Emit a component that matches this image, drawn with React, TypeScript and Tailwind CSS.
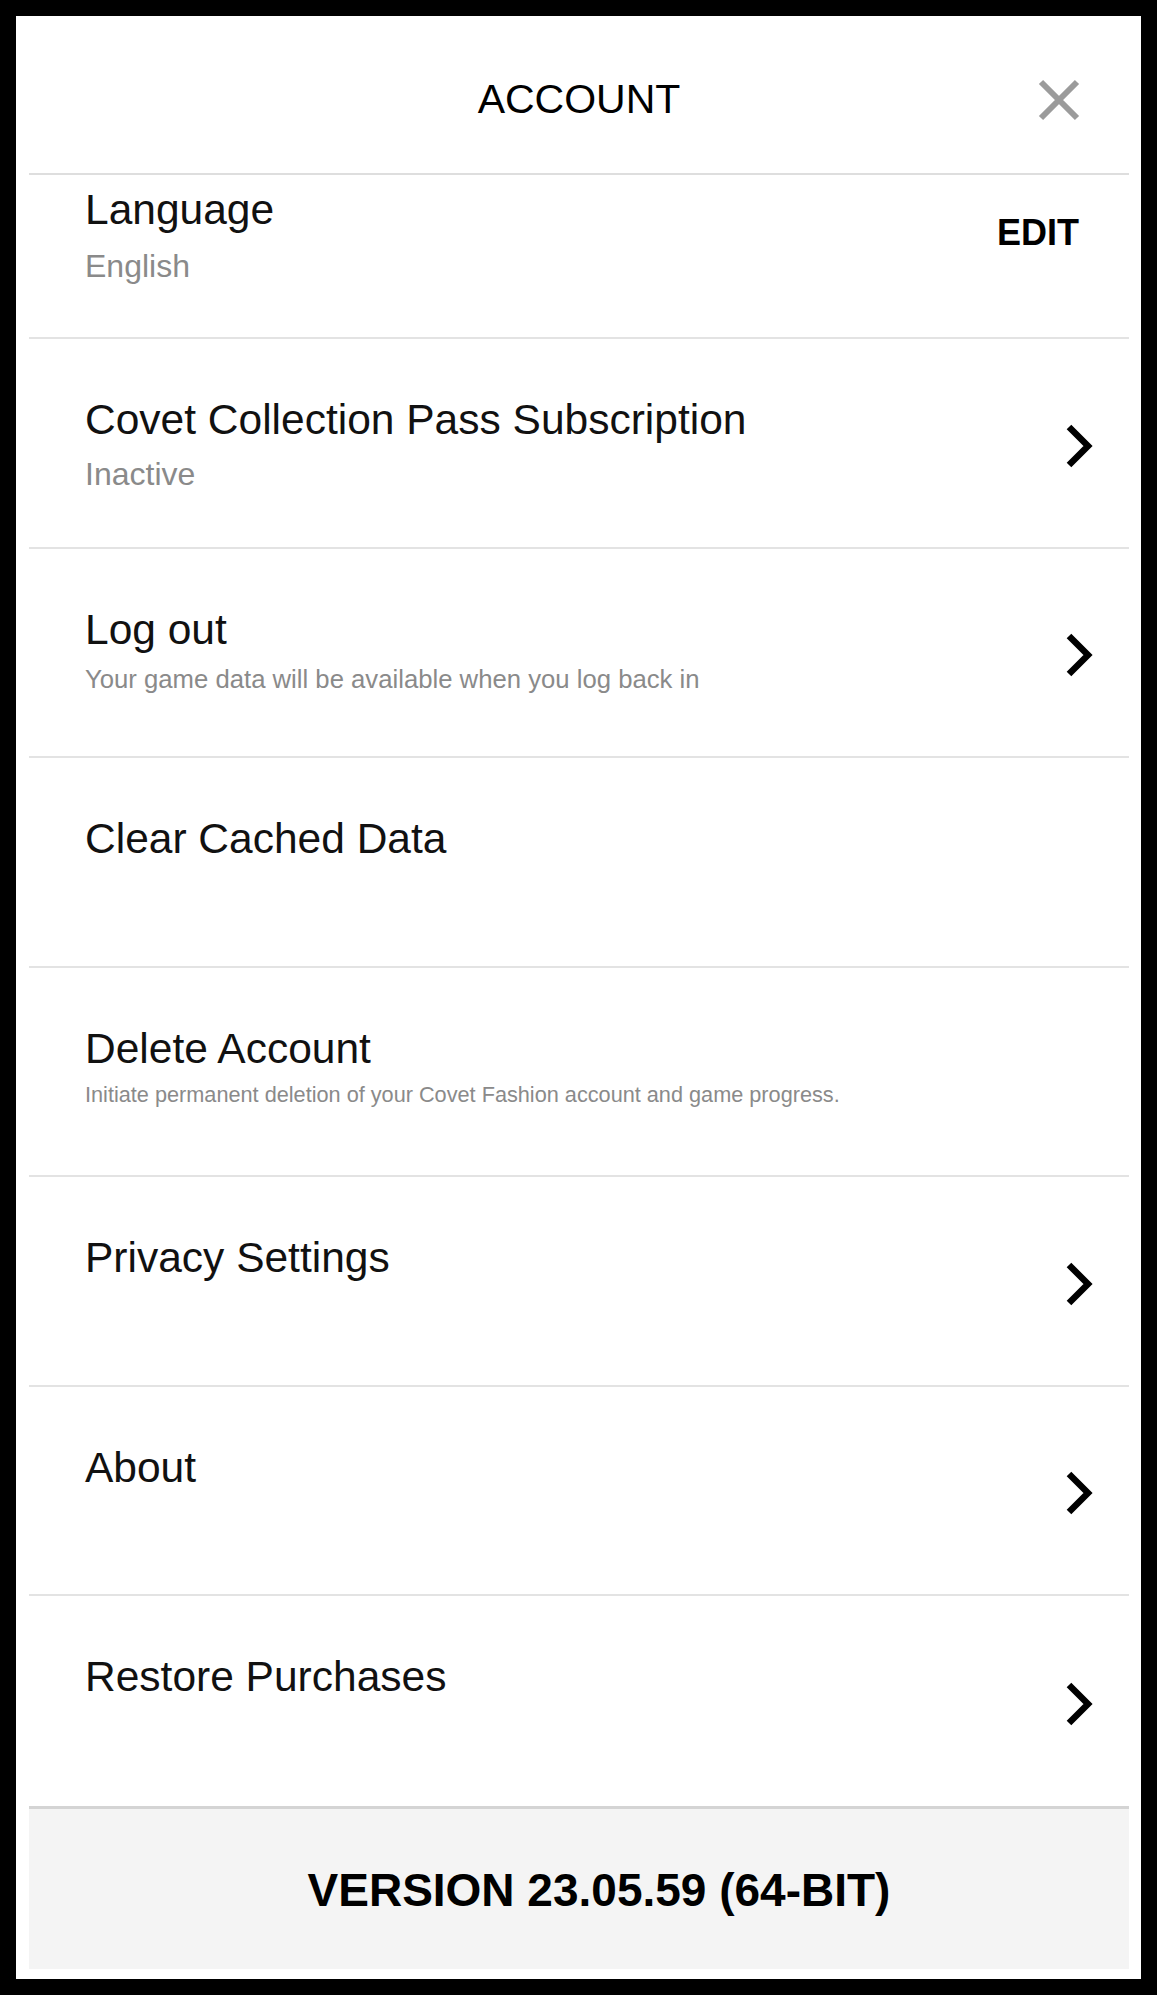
const rows = [
  {
    title: "Covet Collection Pass Subscription",
    sub: "Inactive",
    subSize: "text-[32px] leading-[38px] mt-[9px]",
    chevron: true,
  },
  {
    title: "Log out",
    sub: "Your game data will be available when you log back in",
    subSize: "text-[25.7px] leading-[30px] mt-[8px]",
    chevron: true,
  },
  { title: "Clear Cached Data", chevron: false },
  {
    title: "Delete Account",
    sub: "Initiate permanent deletion of your Covet Fashion account and game progress.",
    subSize: "text-[21.7px] leading-[26px] mt-[7px]",
    chevron: false,
  },
  { title: "Privacy Settings", chevron: true },
  { title: "About", chevron: true },
  { title: "Restore Purchases", chevron: true, last: true },
];

const Chevron = () => (
  <svg width="30" height="48" viewBox="0 0 30 48" className="self-center mt-[6px] shrink-0">
    <polyline
      points="5,5 24,24 5,43"
      fill="none"
      stroke="#000"
      strokeWidth="6.5"
      strokeLinejoin="miter"
    />
  </svg>
);

const App = () => {
  return (
    <div
      className="min-h-screen bg-black p-4"
      style={{ fontFamily: '"Liberation Sans", Arial, sans-serif' }}
    >
      <div className="flex h-[1963px] flex-col bg-white pl-[13px] pr-[12px] pb-[11px]">
        {/* header */}
        <div className="grid h-[159px] shrink-0 grid-cols-[1fr_auto_1fr] items-center border-b-2 border-[#dedede] pt-[10px]">
          <div />
          <h1 className="text-[41px] font-normal text-black">ACCOUNT</h1>
          <div className="flex justify-end pr-[48px]">
            <svg width="44" height="44" viewBox="0 0 44 44">
              <path d="M4 4 L40 40 M40 4 L4 40" stroke="#9b9b9b" strokeWidth="6" />
            </svg>
          </div>
        </div>

        {/* language */}
        <div className="flex h-[164px] shrink-0 border-b-2 border-[#e3e3e3] pl-[56px] pr-[50px]">
          <div className="flex-1 pt-[9px]">
            <div className="text-[42.5px] leading-[52px] text-[#111]">Language</div>
            <div className="mt-[11px] text-[32px] leading-[38px] text-[#8a8a8a]">English</div>
          </div>
          <div className="pt-[38px] text-[36px] font-bold leading-[40px] text-black">EDIT</div>
        </div>

        {rows.map((r) => (
          <div
            key={r.title}
            className={`flex h-[209.5px] shrink-0 pl-[56px] pr-[35px] ${
              r.last ? "" : "border-b-2 border-[#e3e3e3]"
            }`}
          >
            <div className="flex-1 pt-[55px]">
              <div className="text-[42.5px] leading-[52px] text-[#111]">{r.title}</div>
              {r.sub && <div className={`${r.subSize} text-[#8a8a8a]`}>{r.sub}</div>}
            </div>
            {r.chevron && <Chevron />}
          </div>
        ))}

        {/* footer */}
        <div className="flex h-[163px] shrink-0 items-center justify-center border-t-[3px] border-[#d4d4d4] bg-[#f4f4f4] pt-[4px] pl-[40px]">
          <span className="text-[46px] font-bold text-black">VERSION 23.05.59 (64-BIT)</span>
        </div>
      </div>
    </div>
  );
};

export default App;
